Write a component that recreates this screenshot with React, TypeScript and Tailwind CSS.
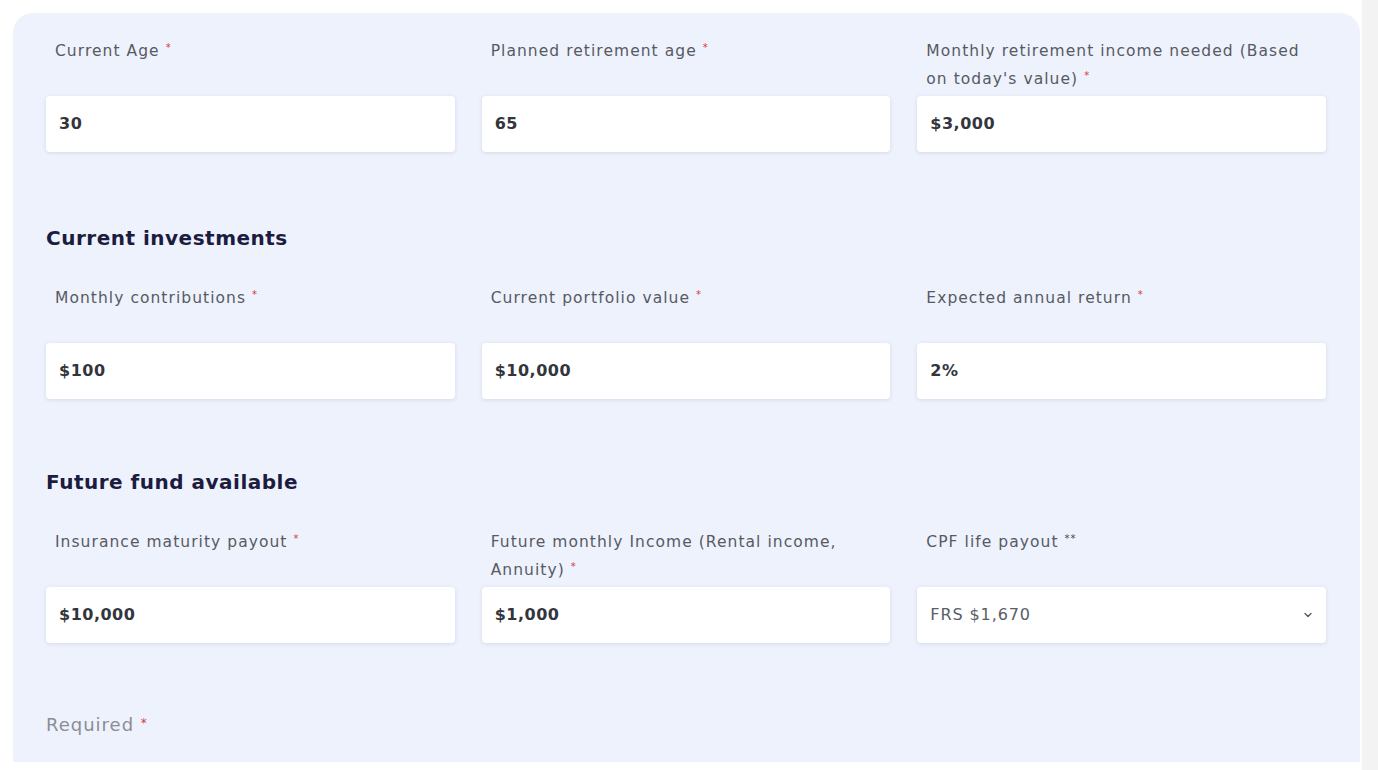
import React from "react";

const font = { fontFamily: '"DejaVu Sans", Verdana, sans-serif' };

function Mark({ mark, red = true, size = "text-[10px]" }: { mark: string; red?: boolean; size?: string }) {
  return (
    <span className={`${size} leading-none align-top relative top-[6px] ${red ? "text-[#d9383e]" : "text-[#444]"}`}>{mark}</span>
  );
}

function Label({ text, mark = "*" }: { text: string; mark?: string }) {
  return (
    <div className="min-h-[56px] mb-[3px] pl-[9px] pr-[14px] text-[15.5px] leading-[28px] tracking-[1.05px] text-[#575a63]">
      {text} <Mark mark={mark} red={mark === "*"} />
    </div>
  );
}

function Input({ value }: { value: string }) {
  return (
    <div className="h-[56px] bg-white rounded-[4px] shadow-[0_1px_4px_rgba(30,40,80,0.12)] flex items-center px-[13px] text-[16px] font-bold tracking-[0.5px] text-[#33353d]">
      {value}
    </div>
  );
}

function Select({ value }: { value: string }) {
  return (
    <div className="h-[56px] bg-white rounded-[4px] shadow-[0_1px_4px_rgba(30,40,80,0.12)] flex items-center justify-between pl-[13px] pr-[12px] text-[16px] tracking-[0.9px] text-[#5a5d66]">
      <span>{value}</span>
      <svg width="12" height="12" viewBox="0 0 24 24" fill="none" stroke="#555" strokeWidth="2.6" strokeLinecap="round" strokeLinejoin="round">
        <path d="M6 9l6 6 6-6" />
      </svg>
    </div>
  );
}

function Row({ items }: { items: { label: string; mark?: string; value: string; select?: boolean }[] }) {
  return (
    <div className="grid grid-cols-3 gap-x-[27px]">
      {items.map((it) => (
        <div key={it.label} className="flex flex-col">
          <Label text={it.label} mark={it.mark} />
          {it.select ? <Select value={it.value} /> : <Input value={it.value} />}
        </div>
      ))}
    </div>
  );
}

function Heading({ children }: { children: React.ReactNode }) {
  return <h2 className="text-[20px] leading-[28px] font-bold tracking-[0.5px] text-[#1b1c40] mb-[32px]">{children}</h2>;
}

export default function App() {
  return (
    <div style={font} className="w-[1378px] h-[770px] bg-white flex overflow-hidden">
      <div className="pl-[13px] pt-[13px] flex-1">
        <div className="bg-[#eef2fd] rounded-t-[20px] h-[749px] pl-[33px] pr-[34px] pt-[24px]">
          <Row
            items={[
              { label: "Current Age", value: "30" },
              { label: "Planned retirement age", value: "65" },
              { label: "Monthly retirement income needed (Based on today's value)", value: "$3,000" },
            ]}
          />
          <div className="mt-[72px]">
            <Heading>Current investments</Heading>
          </div>
          <Row
            items={[
              { label: "Monthly contributions", value: "$100" },
              { label: "Current portfolio value", value: "$10,000" },
              { label: "Expected annual return", value: "2%" },
            ]}
          />
          <div className="mt-[69px]">
            <Heading>Future fund available</Heading>
          </div>
          <Row
            items={[
              { label: "Insurance maturity payout", value: "$10,000" },
              { label: "Future monthly Income (Rental income, Annuity)", value: "$1,000" },
              { label: "CPF life payout", mark: "**", value: "FRS $1,670", select: true },
            ]}
          />
          <div className="mt-[68px] text-[18px] leading-[28px] tracking-[1px] text-[#8a8d96]">
            Required <Mark mark="*" size="text-[12px]" />
          </div>
        </div>
      </div>
      <div className="w-[16px] ml-[2px] bg-[#f3f3f3]" />
    </div>
  );
}
